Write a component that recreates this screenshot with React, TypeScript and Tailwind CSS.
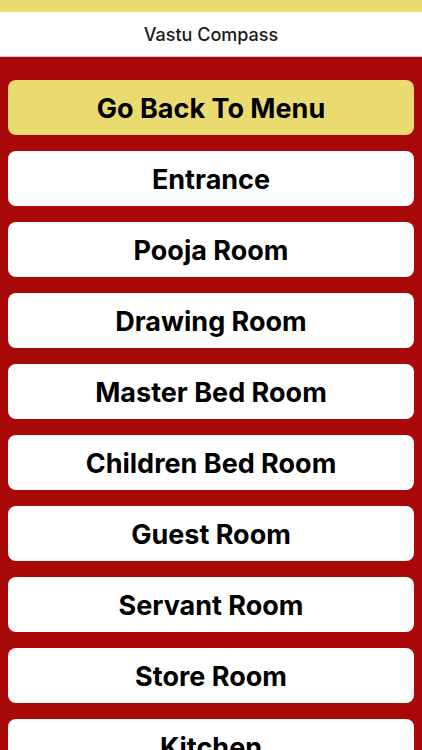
import React from 'react';

const rooms = [
  'Entrance',
  'Pooja Room',
  'Drawing Room',
  'Master Bed Room',
  'Children Bed Room',
  'Guest Room',
  'Servant Room',
  'Store Room',
  'Kitchen',
];

export default function App() {
  return (
    <div className="h-[750px] w-full overflow-hidden flex flex-col bg-[#a90909] font-['Inter',sans-serif]">
      <div className="h-[12px] shrink-0 bg-[#eadb70]" />
      <div className="h-[45px] shrink-0 bg-white flex items-center justify-center border-b border-[#c9c9c9]">
        <span className="text-[18px] font-medium text-[#1a1a1a]">Vastu Compass</span>
      </div>
      <div className="flex flex-col gap-4 px-2 pt-[23px]">
        <button className="h-[55px] shrink-0 rounded-lg bg-[#eadb70] pt-[4px] text-[27px] font-bold text-black">
          Go Back To Menu
        </button>
        {rooms.map((r) => (
          <button
            key={r}
            className="h-[55px] shrink-0 rounded-lg bg-white pt-[4px] text-[27px] font-bold text-black"
          >
            {r}
          </button>
        ))}
      </div>
    </div>
  );
}
